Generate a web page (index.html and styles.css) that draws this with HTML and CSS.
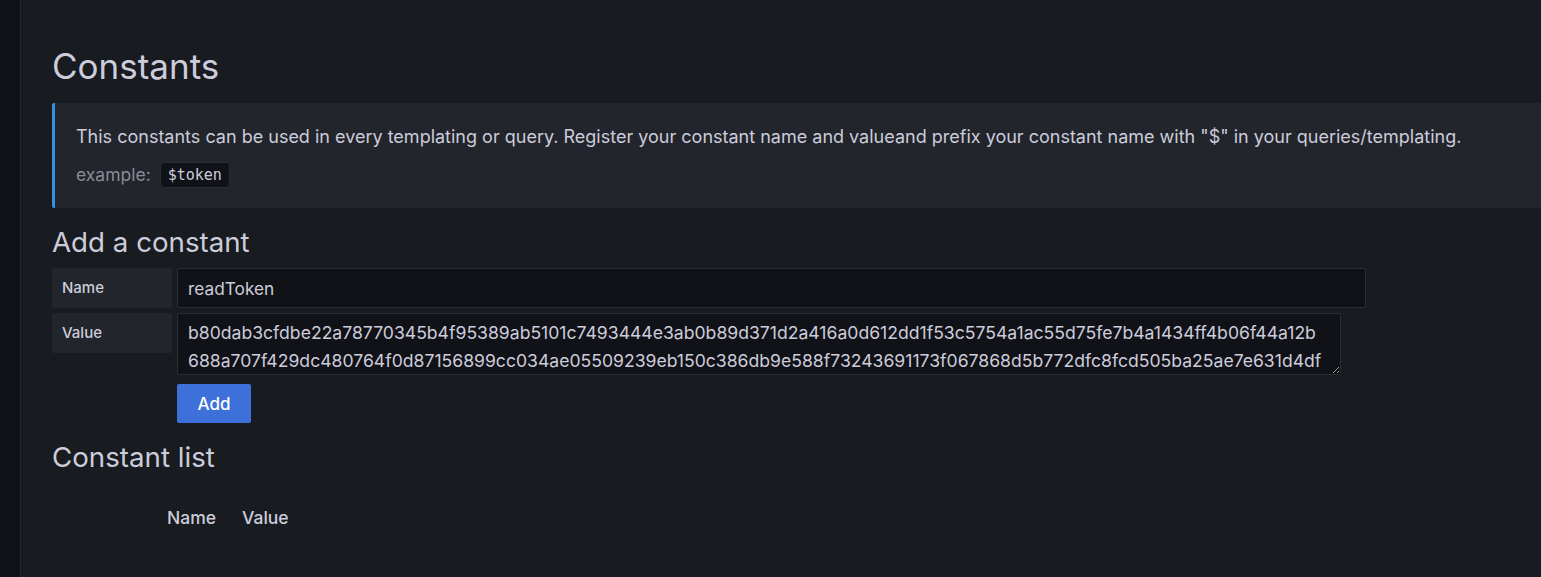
FILE: index.html
```html
<!DOCTYPE html>
<html lang="en">
<head>
<meta charset="utf-8">
<title>Constants</title>
<link rel="stylesheet" href="styles.css">
</head>
<body>
<div class="app">
  <aside class="sidebar"></aside>
  <main class="main">
    <h1 class="page-title">Constants</h1>
    <div class="info">
      <p class="info-text">This constants can be used in every templating or query. Register your constant name and valueand prefix your constant name with "$" in your queries/templating.</p>
      <p class="info-example"><span class="muted">example:</span> <code class="code">$token</code></p>
    </div>
    <h2 class="section-title">Add a constant</h2>
    <div class="form">
      <div class="field">
        <label class="field-label">Name</label>
        <input class="input" type="text" value="readToken">
      </div>
      <div class="field">
        <label class="field-label">Value</label>
        <textarea class="textarea" rows="2">b80dab3cfdbe22a78770345b4f95389ab5101c7493444e3ab0b89d371d2a416a0d612dd1f53c5754a1ac55d75fe7b4a1434ff4b06f44a12b688a707f429dc480764f0d87156899cc034ae05509239eb150c386db9e588f73243691173f067868d5b772dfc8fcd505ba25ae7e631d4df</textarea>
      </div>
      <div class="actions">
        <button class="btn" type="button">Add</button>
      </div>
    </div>
    <h2 class="section-title list-title">Constant list</h2>
    <table class="table">
      <thead>
        <tr><th class="col-spacer"></th><th>Name</th><th>Value</th></tr>
      </thead>
    </table>
  </main>
</div>
</body>
</html>
```
FILE: styles.css
```css
* { box-sizing: border-box; }
html, body {
  margin: 0;
  height: 100%;
  background: #181b1f;
  color: #ccccdc;
  font-family: Inter, "Noto Sans", sans-serif;
  overflow: hidden;
}
.app {
  display: flex;
  height: 577px;
}
.sidebar {
  width: 21px;
  flex: 0 0 21px;
  background: #111217;
  border-right: 1px solid #24262c;
}
.main {
  flex: 1;
  padding: 46px 0 0 31px;
  min-width: 0;
}
.page-title {
  margin: 0 0 17px;
  font-size: 35px;
  font-weight: 400;
  line-height: 40px;
  color: #ccccdc;
}
.info {
  background: #22252b;
  border-left: 3px solid #3192e0;
  border-radius: 2px 0 0 2px;
  padding: 22px 21px 20px;
}
.info-text {
  margin: 0;
  font-size: 18px;
  line-height: 24px;
}
.info-example {
  margin: 13px 0 0;
  font-size: 17.5px;
  line-height: 26px;
  display: flex;
  align-items: center;
  gap: 9px;
}
.muted { color: #8a8b97; }
.code {
  font-family: "DejaVu Sans Mono", "Liberation Mono", monospace;
  font-size: 15px;
  background: #111217;
  border: 1px solid #2a2c32;
  border-radius: 4px;
  padding: 0 7px;
  height: 26px;
  line-height: 24px;
  color: #ccccdc;
}
.section-title {
  margin: 17px 0 9px;
  font-size: 27.7px;
  font-weight: 400;
  line-height: 34px;
}
.form {
  display: flex;
  flex-direction: column;
  gap: 5px;
}
.field {
  display: flex;
  gap: 5px;
  align-items: flex-start;
}
.field-label {
  width: 120px;
  flex: 0 0 120px;
  height: 40px;
  background: #22252b;
  border-radius: 2px;
  font-size: 15px;
  font-weight: 500;
  line-height: 40px;
  padding-left: 10px;
}
.input {
  width: 1189px;
  height: 40px;
  background: #111217;
  border: 1px solid #2a2c32;
  border-radius: 2px;
  color: #ccccdc;
  font-family: Inter, "Noto Sans", sans-serif;
  font-size: 17.3px;
  padding: 0 10px;
  outline: none;
}
.textarea {
  width: 1164px;
  height: 62px;
  background: #111217;
  border: 1px solid #2a2c32;
  border-radius: 2px;
  color: #ccccdc;
  font-family: Inter, "Noto Sans", sans-serif;
  font-size: 17.6px;
  line-height: 28px;
  padding: 5px 16px 1px 10px;
  resize: vertical;
  overflow: hidden;
  outline: none;
}
.actions {
  padding-left: 125px;
  margin-top: 4px;
}
.btn {
  background: #3d71d9;
  color: #fff;
  border: none;
  border-radius: 2px;
  height: 39px;
  width: 74px;
  padding: 0;
  font-family: Inter, "Noto Sans", sans-serif;
  font-size: 17px;
  font-weight: 500;
}
.list-title { margin-top: 17px; }
.table {
  border-collapse: collapse;
  margin-top: 32px;
}
.table th {
  font-size: 17.5px;
  font-weight: 500;
  text-align: left;
  padding: 0 13px;
  line-height: 24px;
}
.table th.col-spacer { width: 102px; padding: 0; }
```
